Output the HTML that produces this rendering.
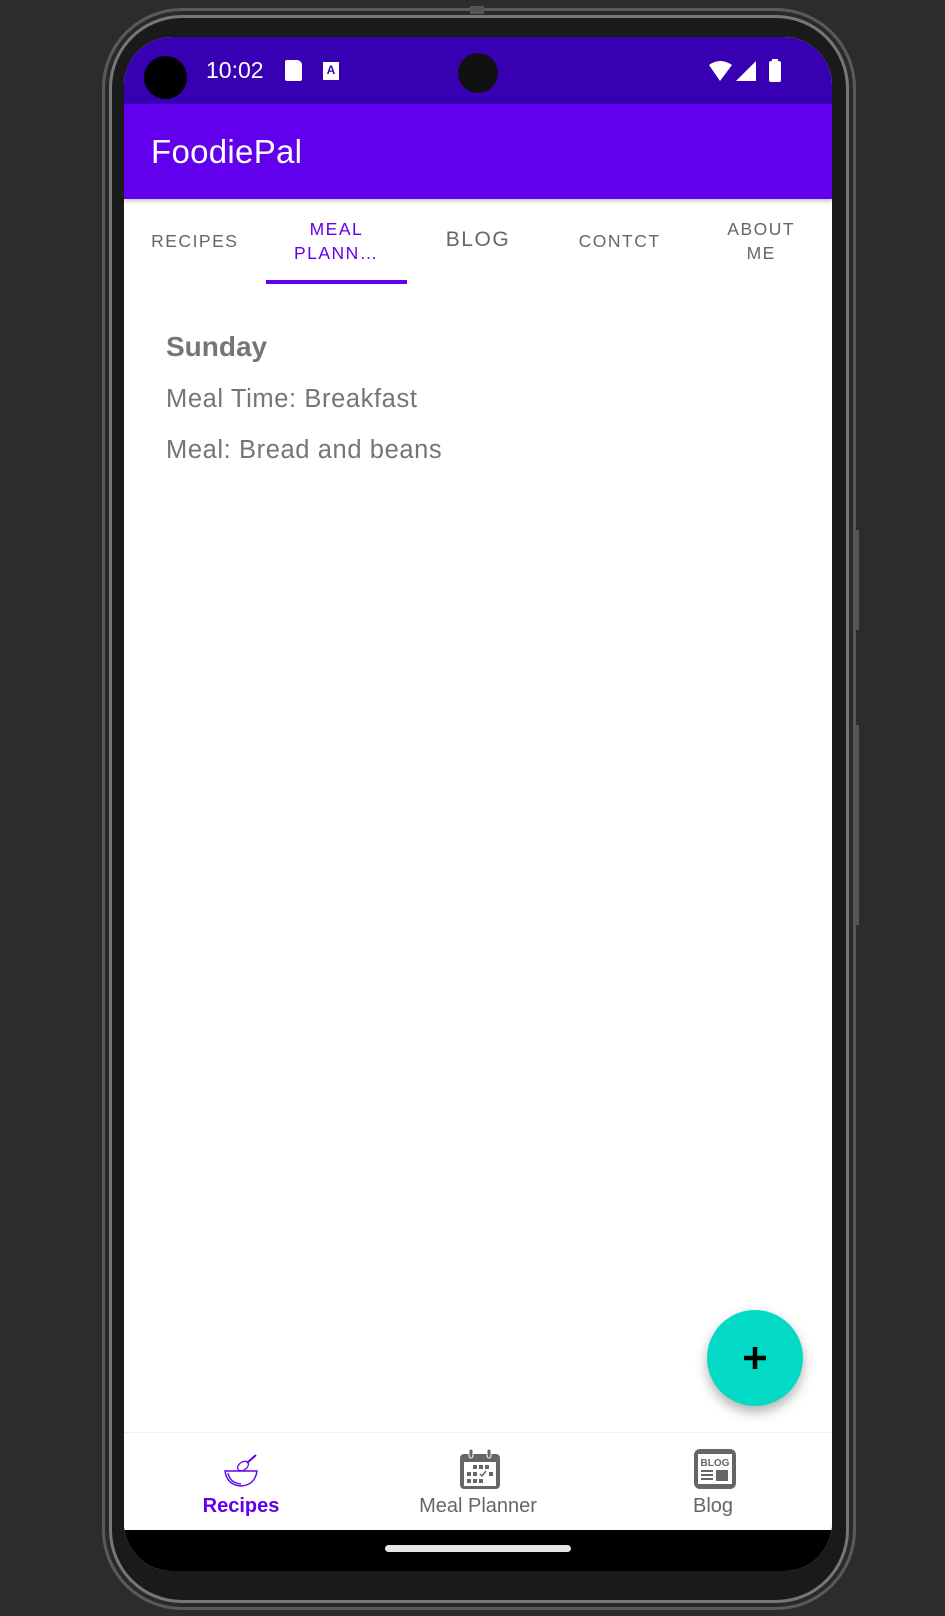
<!DOCTYPE html>
<html><head><meta charset="utf-8"><style>
*{margin:0;padding:0;box-sizing:border-box}
body{width:945px;height:1616px;background:#2b2c2e;position:relative;overflow:hidden;font-family:"Liberation Sans",sans-serif}
.phone{position:absolute;left:102px;top:8px;width:754px;height:1602px;border-radius:80px;background:#1a1a1a;border:3px solid #5a5a5a;box-shadow:inset 0 0 0 4px #2a2a2a,inset 0 0 0 7px #777}
.screen{position:absolute;left:124px;top:37px;width:708px;height:1534px;border-radius:48px;overflow:hidden;background:#fff}
.status{position:absolute;left:0;top:0;width:100%;height:67px;background:#3700b3}
.appbar{position:absolute;left:0;top:67px;width:100%;height:95px;background:#6200ee;box-shadow:0 2px 4px rgba(0,0,0,.25)}
.appbar span{position:absolute;left:27px;top:29px;color:#fff;font-size:33px;letter-spacing:0.3px}
.tab{position:absolute;top:180px;width:141.6px;text-align:center;font-size:17.5px;letter-spacing:1.5px;color:#666;line-height:24px}
.ind{position:absolute;left:142px;top:243px;width:141px;height:4px;background:#6200ee}
.txt{position:absolute;left:42px;color:#757575}
.fab{position:absolute;left:583px;top:1273px;width:96px;height:96px;border-radius:50%;background:#03dac5;box-shadow:0 6px 12px rgba(0,0,0,.3)}
.nav{position:absolute;left:0;top:1395px;width:100%;height:98px;background:#fff;border-top:1px solid #f0f0f0}
.bottom{position:absolute;left:0;top:1493px;width:100%;height:41px;background:#000}
.lbl{position:absolute;top:1458px;width:200px;text-align:center;font-size:20px;color:#666}
</style></head><body>
<div class="phone"></div>
<div style="position:absolute;left:470px;top:6px;width:14px;height:8px;background:#555"></div>
<div style="position:absolute;left:853px;top:530px;width:6px;height:100px;background:#555"></div>
<div style="position:absolute;left:853px;top:725px;width:6px;height:200px;background:#555"></div>
<div class="screen">
 <div class="status">
  <div style="position:absolute;left:20px;top:19px;width:43px;height:43px;border-radius:50%;background:#000"></div>
  <div style="position:absolute;left:82px;top:20px;color:#fff;font-size:23px">10:02</div>
  <div style="position:absolute;left:161px;top:23px;width:17px;height:21px;background:#fff;border-radius:2px 5px 2px 2px"></div>
  <div style="position:absolute;left:199px;top:25px;width:16px;height:18px;background:#fff;color:#3700b3;font-size:12px;font-weight:bold;text-align:center;line-height:16px">A</div>
  <div style="position:absolute;left:334px;top:16px;width:40px;height:40px;border-radius:50%;background:#111"></div>
  <svg style="position:absolute;left:583px;top:22px" width="80" height="26"><path d="M2 6 Q13 -2 25 6 L13 22Z" fill="#fff"/><path d="M49 2 L49 22 L29 22Z" fill="#fff"/><rect x="62" y="2" width="12" height="21" rx="2" fill="#fff"/><rect x="65" y="0" width="6" height="3" fill="#fff"/></svg>
 </div>
 <div class="appbar"><span>FoodiePal</span></div>
 <div class="tab" style="left:0;top:192px">RECIPES</div>
 <div class="tab" style="left:141.6px;color:#6200ee">MEAL<br>PLANN…</div>
 <div class="tab" style="left:283.2px;top:191px;font-size:21px">BLOG</div>
 <div class="tab" style="left:424.8px;top:192px">CONTCT</div>
 <div class="tab" style="left:566.4px">ABOUT<br>ME</div>
 <div class="ind"></div>
 <div class="txt" style="top:294px;font-size:28px;font-weight:bold">Sunday</div>
 <div class="txt" style="top:348px;font-size:25.5px;letter-spacing:0.6px">Meal Time: Breakfast</div>
 <div class="txt" style="top:399px;font-size:25.5px;letter-spacing:0.6px">Meal: Bread and beans</div>
 <div class="fab"><svg width="96" height="96"><path d="M48 37V59M37 48H59" stroke="#000" stroke-width="4.5"/></svg></div>
 <div class="nav"></div>
 <svg style="position:absolute;left:99px;top:1415px" width="36" height="36"><path d="M2 19 H34 Q32 33 18 34 Q4 33 2 19Z M5 21 Q7 31 18 32" fill="none" stroke="#6200ee" stroke-width="1.4"/><ellipse cx="20" cy="14" rx="6" ry="4" transform="rotate(-35 20 14)" fill="none" stroke="#6200ee" stroke-width="1.2"/><path d="M24 11 L33 3" stroke="#6200ee" stroke-width="2"/></svg>
 <svg style="position:absolute;left:334px;top:1411px" width="44" height="42"><rect x="2" y="6" width="40" height="35" rx="4" fill="#666"/><rect x="6" y="14" width="32" height="24" fill="#fff"/><rect x="11" y="1" width="4" height="9" rx="2" fill="#666" stroke="#fff"/><rect x="29" y="1" width="4" height="9" rx="2" fill="#666" stroke="#fff"/><g fill="#666"><rect x="15" y="17" width="4" height="4"/><rect x="21" y="17" width="4" height="4"/><rect x="27" y="17" width="4" height="4"/><rect x="9" y="24" width="4" height="4"/><rect x="15" y="24" width="4" height="4"/><rect x="31" y="24" width="4" height="4"/><rect x="9" y="31" width="4" height="4"/><rect x="15" y="31" width="4" height="4"/><rect x="21" y="31" width="4" height="4"/></g><path d="M22 26 L24 28 L28 23" stroke="#666" stroke-width="1.5" fill="none"/></svg>
 <svg style="position:absolute;left:569px;top:1411px" width="44" height="42"><rect x="1" y="1" width="42" height="40" rx="6" fill="#666"/><rect x="5" y="6" width="34" height="30" fill="#fff"/><text x="22" y="18" font-family="Liberation Sans" font-size="10" font-weight="bold" fill="#666" text-anchor="middle">BLOG</text><g fill="#666"><rect x="8" y="22" width="12" height="2"/><rect x="8" y="26" width="12" height="2"/><rect x="8" y="30" width="12" height="2"/><rect x="23" y="22" width="12" height="11"/></g></svg>
 <div class="lbl" style="left:17px;color:#6200ee;font-weight:bold">Recipes</div>
 <div class="lbl" style="left:254px">Meal Planner</div>
 <div class="lbl" style="left:489px">Blog</div>
 <div class="bottom"><div style="position:absolute;left:261px;top:15px;width:186px;height:7px;border-radius:4px;background:#e5e5e5"></div></div>
</div>
</body></html>
